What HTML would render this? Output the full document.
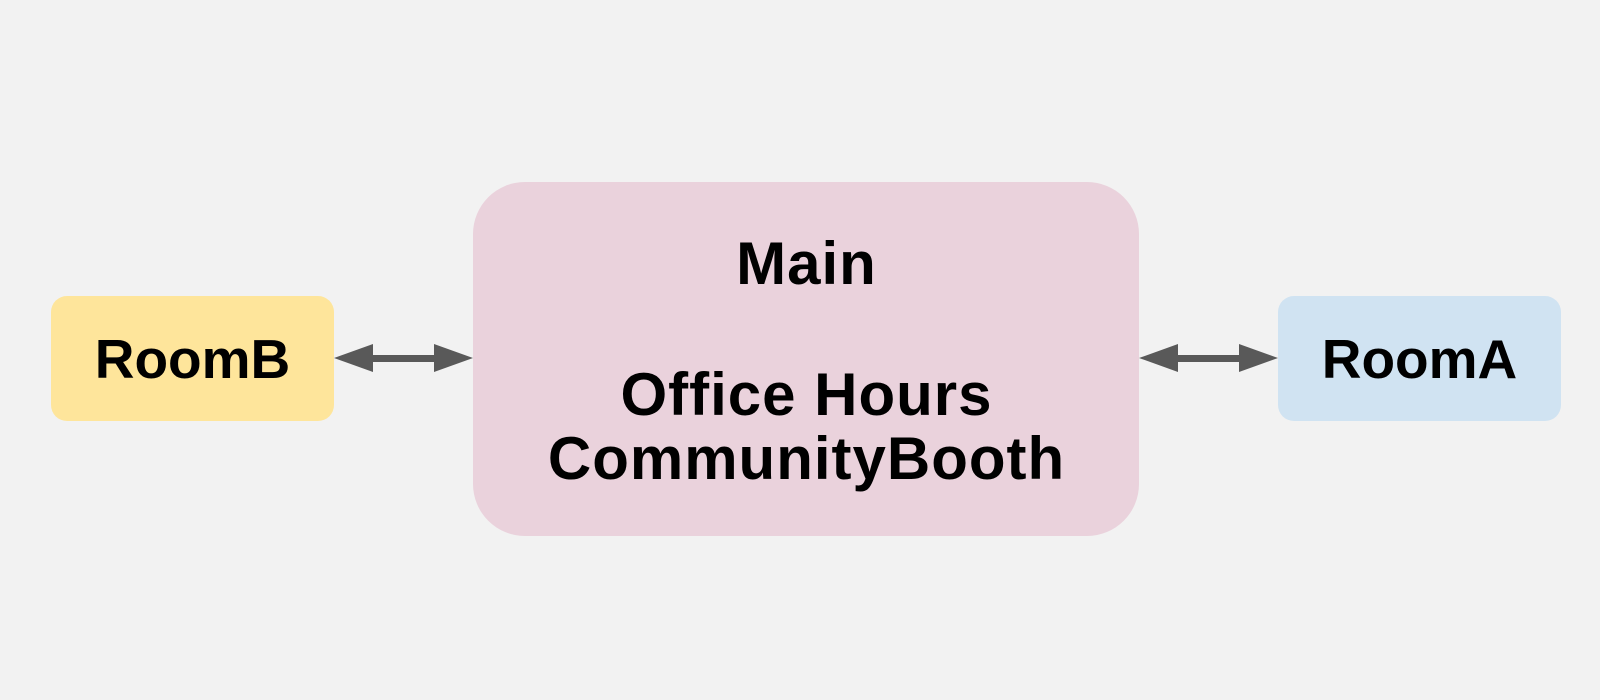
<!DOCTYPE html>
<html><head><style>
body{margin:0;width:1600px;height:700px;background:#f2f2f2;position:relative;overflow:hidden;font-family:"Liberation Sans",sans-serif;font-weight:bold;color:#000}
.b{position:absolute;display:flex;align-items:center;justify-content:center;text-align:center;font-size:55px}
.t{position:absolute;left:0;width:100%;text-align:center;font-size:60px;line-height:1;letter-spacing:1px;text-indent:1px}
</style></head><body>
<div class="b" style="left:51px;top:296px;width:283px;height:125px;background:#fee59b;border-radius:16px">RoomB</div>
<div class="b" style="left:1278px;top:296px;width:283px;height:125px;background:#d0e3f2;border-radius:16px">RoomA</div>
<div style="position:absolute;left:473px;top:182px;width:666px;height:354px;background:#ead2dc;border-radius:52px">
<div class="t" style="top:52px">Main</div>
<div class="t" style="top:183px">Office Hours</div>
<div class="t" style="top:247px">CommunityBooth</div>
</div>
<svg width="1600" height="700" style="position:absolute;left:0;top:0">
<g fill="#595959">
<rect x="370" y="355" width="66" height="7"/>
<polygon points="334,358 373,344 373,372"/>
<polygon points="473,358 434,344 434,372"/>
<rect x="1175" y="355" width="66" height="7"/>
<polygon points="1139,358 1178,344 1178,372"/>
<polygon points="1278,358 1239,344 1239,372"/>
</g></svg>
</body></html>
